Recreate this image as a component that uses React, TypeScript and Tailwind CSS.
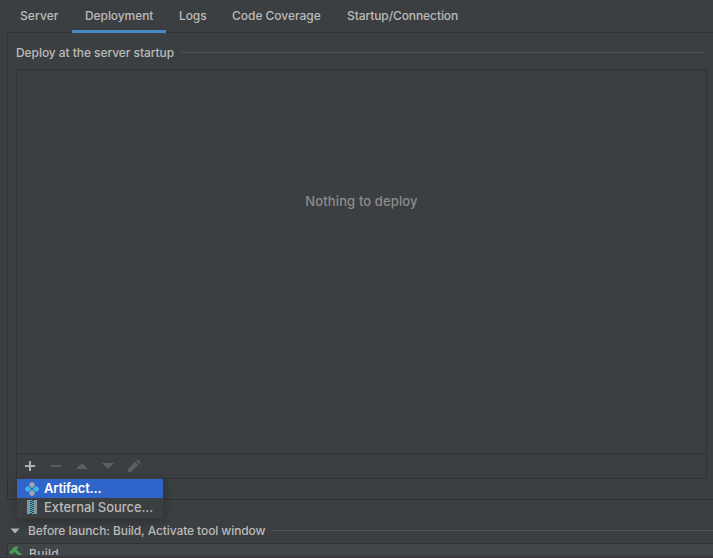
import React from 'react';

const tabs = [
  { label: 'Server', box: 'pl-5 w-[72px]', text: 'tracking-[0.1px]' },
  { label: 'Deployment', box: 'pl-[13px] w-[94px]', text: 'tracking-[-0.08px]' },
  { label: 'Logs', box: 'pl-[13px] w-[53px]', text: 'tracking-[-0.1px]' },
  { label: 'Code Coverage', box: 'pl-[13px] w-[115px]', text: 'tracking-[-0.03px]' },
  { label: 'Startup/Connection', box: 'pl-[13px] w-[140px]', text: 'tracking-[-0.09px]' },
];

function Tabs() {
  return (
    <div className="flex h-8 shrink-0">
      {tabs.map((t) => (
        <div key={t.label} className={`relative h-8 whitespace-nowrap leading-8 ${t.box}`}>
          <span className={t.text}>{t.label}</span>
          {t.label === 'Deployment' && (
            <div className="absolute left-0 top-[30px] z-10 h-[3px] w-full bg-[#4a88c7]" />
          )}
        </div>
      ))}
    </div>
  );
}

function Toolbar() {
  return (
    <div className="flex h-[25px] items-center border-t border-[#323232] pl-[5px]">
      <svg width="124" height="16" viewBox="0 0 124 16">
        <path d="M7 3h2v4h4v2H9v4H7V9H3V7h4z" fill="#afb1b3" />
        <path d="M29 7h10v2H29z" fill="#5c5e60" />
        <path d="M54 11h12l-6-6z" fill="#5c5e60" />
        <path d="M80 5h12l-6 6z" fill="#5c5e60" />
        <path d="M106 11l7.2-7.2 3 3-7.2 7.2H106zM114.1 2.9l1-1q.7-.7 1.4 0l1.6 1.6q.7.7 0 1.4l-1 1z" fill="#5c5e60" />
      </svg>
    </div>
  );
}

function ArtifactIcon() {
  return (
    <svg width="16" height="16" viewBox="0 0 16 16" className="shrink-0">
      <path d="M7.2 1.1h1.6l2 2v1.6l-2 2H7.2l-2-2V3.1zM7.2 9.3h1.6l2 2v1.6l-2 2H7.2l-2-2v-1.6z" fill="#9aa7b0" />
      <path d="M3.1 5.2h1.6l2 2v1.6l-2 2H3.1l-2-2V7.2zM11.3 5.2h1.6l2 2v1.6l-2 2h-1.6l-2-2V7.2z" fill="#40b6e0" />
    </svg>
  );
}

function ArchiveIcon() {
  return (
    <svg width="16" height="16" viewBox="0 0 16 16" className="shrink-0">
      <path d="M3 1h3v14H3zM10 1h3v14h-3z" fill="#87939a" />
      <path d="M6 1h2v1H6zM8 2h2v1H8zM6 3h2v1H6zM8 4h2v1H8zM6 5h2v1H6zM8 6h2v1H8zM6 7h2v1H6zM8 8h2v1H8zM6 9h2v1H6zM8 10h2v1H8zM6 11h2v1H6zM8 12h2v1H8zM6 13h2v1H6zM8 14h2v1H8z" fill="#40b6e0" />
    </svg>
  );
}

function AddMenu() {
  return (
    <div className="absolute left-[16px] top-[477px] z-20 w-[148px] border border-[#353738] bg-[#3c3f41] text-[13px] shadow-[0_2px_8px_rgba(0,0,0,0.25)]">
      <div className="mt-px flex h-[19px] items-center bg-[#2f65ca] pl-[7px] leading-[19px] text-white">
        <ArtifactIcon />
        <span className="ml-1 font-semibold tracking-[-0.22px]">Artifact...</span>
      </div>
      <div className="flex h-[20px] items-start pl-[7px] leading-[18px]">
        <div className="pt-px"><ArchiveIcon /></div>
        <span className="ml-1 whitespace-nowrap tracking-[-0.06px]">External Source...</span>
      </div>
    </div>
  );
}

export default function App() {
  return (
    <div className="relative flex h-[558px] w-[713px] flex-col overflow-hidden bg-[#3c3f41] font-['Inter',sans-serif] text-[12px] font-medium text-[#bbbbbb]">
      <Tabs />
      <div className="ml-[7px] flex h-[468px] shrink-0 flex-col border-y border-l border-[#323232] pl-2">
        <div className="flex h-9 items-center pb-px pt-[4px]">
          <span className="w-[165px] whitespace-nowrap tracking-[-0.06px]">Deploy at the server startup</span>
          <div className="h-px w-[523px] bg-[#515151]" />
        </div>
        <div className="flex h-[410px] w-[691px] flex-col border border-[#323232]">
          <div className="flex-1 pt-[121px] text-center text-[13px] leading-5 text-[#8c8c8c]">
            <span className="tracking-[0.12px]">Nothing to deploy</span>
          </div>
          <Toolbar />
        </div>
      </div>
      <div className="flex h-[43px] shrink-0 items-center pl-[10px] pt-[18px]">
        <svg width="10" height="6" viewBox="0 0 10 6"><path d="M.5.5h9L5 5.5z" fill="#afb1b3" /></svg>
        <span className="ml-2 w-[243px] whitespace-nowrap tracking-[-0.09px]">Before launch: Build, Activate tool window</span>
        <div className="h-px flex-1 bg-[#515355]" />
      </div>
      <div className="ml-[7px] h-[12px] shrink-0 overflow-hidden border-l border-t border-[#323232] bg-[#414547]">
        <div className="flex">
          <svg width="14" height="14" viewBox="0 0 14 14" className="ml-px mt-[2px] shrink-0">
            <path d="M0 6.2L5.6.4h4.2L7.6 3.4l6 6-2.2 2.2-5.8-5.8L2.6 8.6z" fill="#499c54" />
          </svg>
          <span className="ml-[6px] leading-[19px] tracking-[0.3px]">Build</span>
        </div>
      </div>
      <div className="h-[2px] bg-[#3c3f41]" />
      <div className="h-px bg-[#3a3436]" />
      <AddMenu />
    </div>
  );
}
